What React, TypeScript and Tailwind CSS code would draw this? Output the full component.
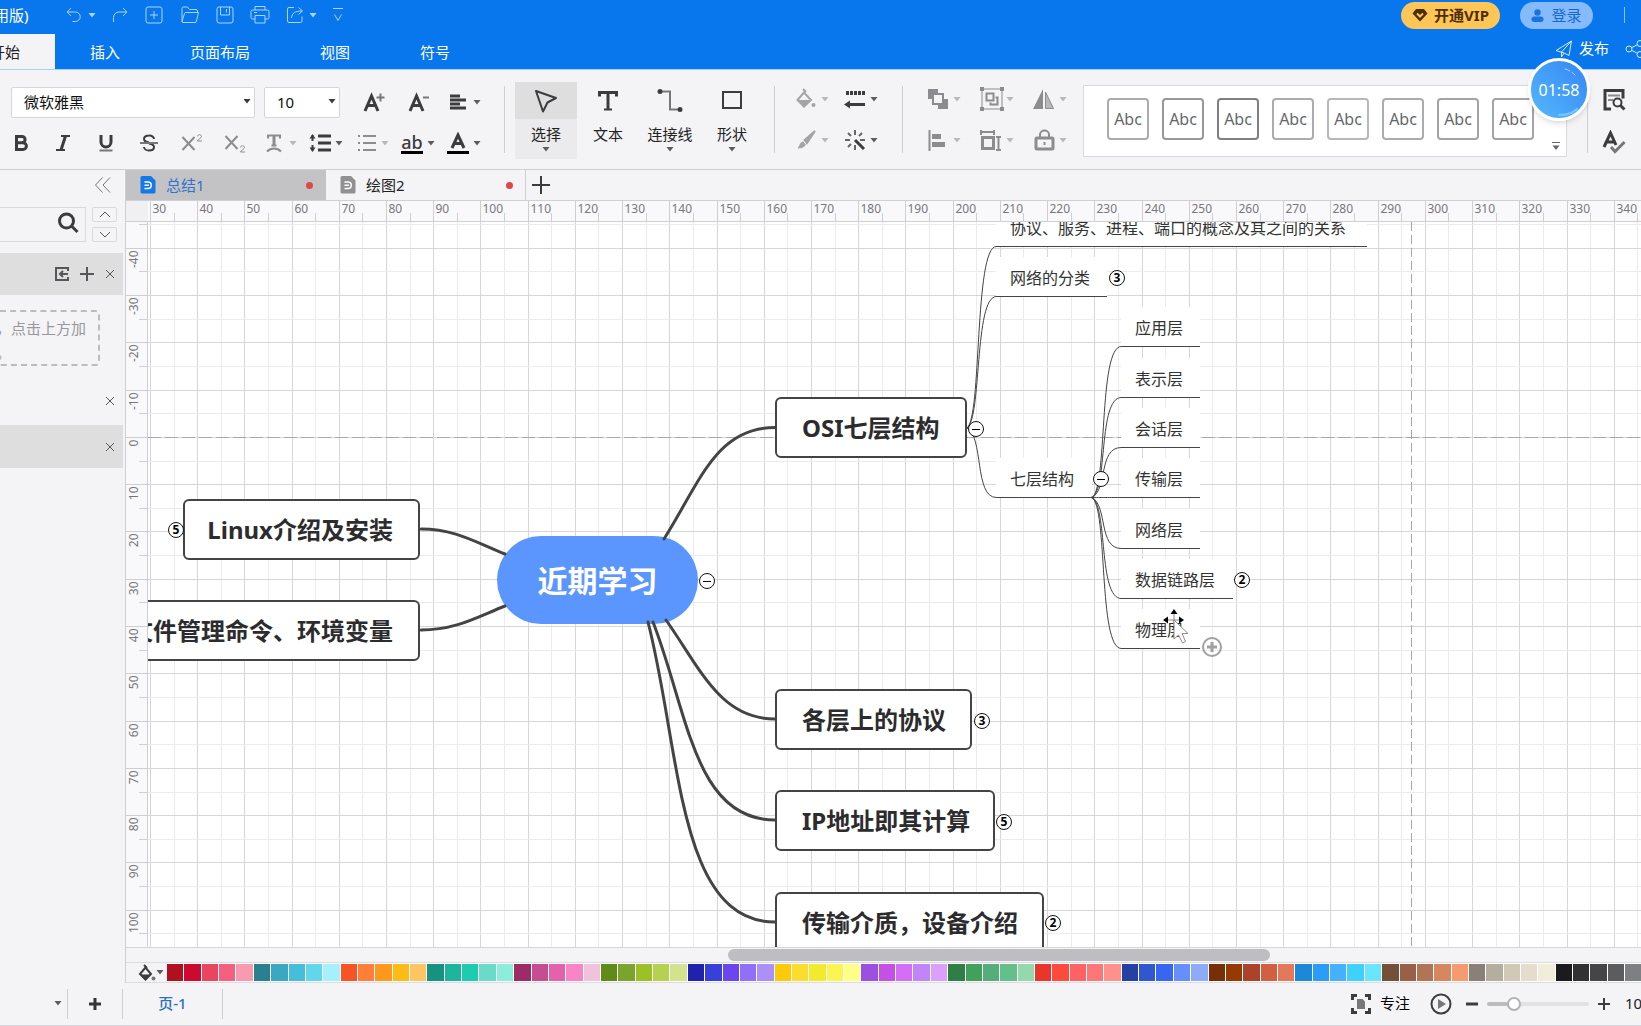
import type { ReactNode } from 'react';
import { clsx } from 'clsx';

const palette = [
    '#b01020', '#cc0a30', '#e84560', '#f5607f', '#f99aae',
    '#2a808f', '#3aa8c0', '#45bedb', '#62d6ea', '#a5f0fc',
    '#f95325', '#ff7f3a', '#ff981c', '#fdbb18', '#fec562',
    '#169380', '#1db59b', '#1ecab0', '#6adaca', '#8aeedb',
    '#9c2c66', '#c44e90', '#e362ab', '#f985c5', '#f1c2de',
    '#5f8c16', '#7aa42b', '#9dbf28', '#b5d14f', '#d2e28e',
    '#1e22ad', '#3940d8', '#6b45ee', '#9170f8', '#aa90f8',
    '#fec80b', '#fcdc2e', '#f2ea2c', '#fbf452', '#feff88',
    '#9b50e0', '#c450e6', '#d66df6', '#c185fa', '#dba0fb',
    '#2d7f46', '#40a05c', '#54ae7a', '#64c08a', '#94d8ac',
    '#e9352b', '#ff4a3e', '#ff6265', '#ff7678', '#ff908a',
    '#2440a5', '#2f58d0', '#3866f2', '#668ffa', '#8cacf8',
    '#782f05', '#963a04', '#ab422b', '#d26040', '#e3785a',
    '#1b88da', '#2b9df8', '#46b2ff', '#40d0fc', '#68e6ff',
    '#755039', '#986046', '#b37455', '#d7875e', '#f69a70',
    '#8b8078', '#b5ad9e', '#d1c8b6', '#e4dccd', '#f2ecdb',
    '#1a1a1f', '#303035', '#454548', '#5c5c60', '#7e7f82',
];

const styleBorders = [
    'border-[#acacb0]', 'border-[#98989c]', 'border-[#808084]', 'border-[#acacb0]',
    'border-[#b8b8bc]', 'border-[#acacb0]', 'border-[#a4a4a8]', 'border-[#a4a4a8]',
];

// grid geometry of the drawing area
const GRID_X = 47.22;
const GRID_Y = 47.28;
const gridX = (n: number) => Math.floor(2.4 + ((n - 30) / 10) * GRID_X) + 0.5;
const gridY = (n: number) => Math.floor(215.4 + (n / 10) * GRID_Y) + 0.5;
const columns = Array.from({ length: 60 }, (_, i) => 30 + i * 10);
const rows = Array.from({ length: 40 }, (_, i) => -50 + i * 10);
const columnMarks = columns.filter((n) => n <= 340);
const rowMarks = rows.filter((n) => n <= 100);

const topics = [
    { text: 'OSI七层结构', left: 627, top: 175, width: 192 },
    { text: '各层上的协议', left: 627, top: 467, width: 197 },
    { text: 'IP地址即其计算', left: 627, top: 568, width: 220 },
    { text: '传输介质，设备介绍', left: 627, top: 670, width: 269 },
    { text: 'Linux介绍及安装', left: 35, top: 277, width: 237 },
    { text: '文件管理命令、环境变量', left: -48, top: 378, width: 320 },
];

const subtopics = [
    { text: '协议、服务、进程、端口的概念及其之间的关系', line: 24, width: 371 },
    { text: '网络的分类', line: 74, width: 111 },
    { text: '七层结构', line: 275, width: 96 },
];

const layers = [
    { text: '应用层', line: 124, width: 79 },
    { text: '表示层', line: 175, width: 79 },
    { text: '会话层', line: 225, width: 79 },
    { text: '传输层', line: 275, width: 79 },
    { text: '网络层', line: 326, width: 79 },
    { text: '数据链路层', line: 376, width: 112 },
    { text: '物理层', line: 426, width: 79 },
];

const counters = [
    { x: 828, y: 207, n: 0 },
    { x: 559, y: 359, n: 0 },
    { x: 953, y: 257, n: 0 },
    { x: 834, y: 499, n: 3 },
    { x: 856, y: 600, n: 5 },
    { x: 905, y: 701, n: 2 },
    { x: 28, y: 308, n: 5 },
    { x: 969, y: 56, n: 3 },
    { x: 1094, y: 358, n: 2 },
];

function Icon({ size = 22, sw = 2, className, children }: { size?: number; sw?: number; className?: string; children: ReactNode }) {
    return (
        <svg width={size} height={size} viewBox={`0 0 ${size} ${size}`} fill="none" stroke="currentColor" strokeWidth={sw} className={clsx('shrink-0', className)} aria-hidden="true">
            {children}
        </svg>
    );
}

function Caret({ className = 'text-[#5c5c60]' }: { className?: string }) {
    return (
        <svg width="8" height="5" viewBox="0 0 8 5" className={clsx('shrink-0', className)} aria-hidden="true">
            <path d="M0.5 0h7L4 4.5z" fill="currentColor" />
        </svg>
    );
}

function IconButton({ label, className, children }: { label: string; className?: string; children: ReactNode }) {
    return (
        <button type="button" aria-label={label} className={clsx('flex shrink-0 items-center justify-center', className)}>
            {children}
        </button>
    );
}

function DropIcon({ label, off, children }: { label: string; off?: boolean; children: ReactNode }) {
    return (
        <button type="button" aria-label={label} className={clsx('flex h-[30px] w-[46px] shrink-0 items-center gap-1', off ? 'text-[#8c8c90]' : 'text-[#3c3c40]')}>
            {children}
            <Caret className={off ? 'text-[#b8b8bc]' : 'text-[#5c5c60]'} />
        </button>
    );
}

function Divider() {
    return <div className="mt-4 h-[67px] w-px shrink-0 bg-[#cfcfd3]" />;
}

function TitleBar() {
    return (
        <div className="flex h-[34px] items-start justify-between text-[#a9d6ff]">
            <div className="flex h-[30px] items-center">
                <span className="-ml-[6px] w-[72px] text-[15px] whitespace-nowrap text-white">用版)</span>
                <IconButton label="撤销" className="w-[15px]">
                    <Icon size={16} sw={1}>
                        <path d="M5 1L1 5L5 9M1 5h8.5a4.500 4.500 0 0 1 0 9.500H6.500" />
                    </Icon>
                </IconButton>
                <IconButton label="撤销列表" className="ml-[7px]"><Caret className="text-[#a9d6ff]" /></IconButton>
                <IconButton label="重做" className="ml-[16px]">
                    <Icon size={16} sw={1}>
                        <path d="M11 1l4 4L11 9M15 5h-8a5.500 5.500 0 0 0-5.500 5.500v4.500" />
                    </Icon>
                </IconButton>
                <IconButton label="新建" className="ml-[17px]">
                    <Icon size={18} sw={1}>
                        <rect x="1" y="1" width="16" height="16" rx="2" />
                        <path d="M9 5v8M5 9h8" />
                    </Icon>
                </IconButton>
                <IconButton label="打开" className="ml-[17px]">
                    <Icon size={20} sw={1}>
                        <path d="M2 17V3.500a1.500 1.500 0 0 1 1.500-1.500h4l2 2.500h6.500a1.500 1.500 0 0 1 1.500 1.500v1.500M2 16.500l2.500-8a1.500 1.500 0 0 1 1.500-1h12.500l-2 8.500a1.500 1.500 0 0 1-1.500 1.500H3a1 1 0 0 1-1-1z" />
                    </Icon>
                </IconButton>
                <IconButton label="保存" className="ml-[16px]">
                    <Icon size={18} sw={1}>
                        <rect x="1" y="1" width="16" height="16" rx="2" />
                        <path d="M4.500 1v8h9V1M10.500 3v3.500" />
                    </Icon>
                </IconButton>
                <IconButton label="打印" className="ml-[16px]">
                    <Icon size={20} sw={1}>
                        <path d="M5 5V1.500h10V5M5 14H2.500A1.500 1.500 0 0 1 1 12.500v-6A1.500 1.500 0 0 1 2.500 5h15A1.500 1.500 0 0 1 19 6.500v6a1.500 1.500 0 0 1-1.500 1.500H15M5 10.500h10v7.500H5zM4 7.500h3" />
                    </Icon>
                </IconButton>
                <IconButton label="导出" className="ml-[16px]">
                    <Icon size={18} sw={1}>
                        <path d="M8 1.500H3A1.500 1.500 0 0 0 1.500 3v12A1.500 1.500 0 0 0 3 16.500h11.500A1.500 1.500 0 0 0 16 15v-4.500M5.500 12c.5-4.500 3-7 10.500-7M12.500 1.500L16.500 5l-4 3.500" />
                    </Icon>
                </IconButton>
                <IconButton label="导出列表" className="ml-[5px]"><Caret className="text-[#a9d6ff]" /></IconButton>
                <IconButton label="自定义" className="ml-[16px]">
                    <svg width="10" height="16" viewBox="0 0 10 16" fill="none" stroke="currentColor" aria-hidden="true">
                        <path d="M0 1.500h10M1.500 7.500L5 13.500l3.500-6" />
                    </svg>
                </IconButton>
            </div>
            <div className="flex h-[30px] items-center">
                <button type="button" className="flex h-[27px] w-[99px] items-center justify-center gap-[6px] rounded-full bg-[#fdc657] text-[15px] font-bold text-[#4e2d05]">
                    <Icon size={16} sw={2}>
                        <path d="M4 2h8l3.500 4.500L8 14.500L0.500 6.500z" fill="#4e2d05" stroke="none" />
                        <path d="M5 6.500l3 3l3-3" stroke="#fdc657" />
                    </Icon>
                    开通VIP
                </button>
                <button type="button" className="ml-5 flex h-[27px] w-[73px] items-center justify-center gap-[7px] rounded-full bg-[#86bbfb] text-[15px] text-[#1668d0]">
                    <Icon size={13} sw={0}>
                        <circle cx="6.500" cy="3.500" r="3.200" fill="#1a72e0" />
                        <rect x="0.500" y="7.500" width="12" height="5.500" rx="2.700" fill="#1a72e0" />
                    </Icon>
                    登录
                </button>
                <div className="mr-4 ml-[31px] h-4 w-px bg-[#8cc4ff]" />
            </div>
        </div>
    );
}

function MenuBar() {
    return (
        <div className="flex h-[35px] justify-between">
            <nav className="-ml-[45px] flex h-full text-[15px] text-white">
                <button type="button" className="bg-[#f4f4f7] px-[35px] pt-0.5 text-[#222]">开始</button>
                <button type="button" className="px-[35px] pt-0.5">插入</button>
                <button type="button" className="px-[35px] pt-0.5">页面布局</button>
                <button type="button" className="px-[35px] pt-0.5">视图</button>
                <button type="button" className="px-[35px] pt-0.5">符号</button>
            </nav>
            <div className="-mr-1 flex items-center pb-1.5 text-[#d5ecff]">
                <button type="button" className="flex items-center gap-[6px] text-[15px] text-white">
                    <Icon size={18} sw={1} className="text-[#d5ecff]">
                        <path d="M1 10.500L16.500 1L14 15.500L9 13zM6.500 12v5l2.500-4M6.500 12L16.500 1" />
                    </Icon>
                    发布
                </button>
                <IconButton label="分享" className="ml-4">
                    <Icon size={20} sw={1}>
                        <circle cx="4" cy="10" r="3" />
                        <circle cx="15" cy="4.500" r="3" />
                        <circle cx="15" cy="15.500" r="3" />
                        <path d="M6.700 8.600l5.600-2.800M6.700 11.400l5.600 2.800" />
                    </Icon>
                </IconButton>
            </div>
        </div>
    );
}

function FontGroup() {
    return (
        <div className="flex w-[504px] shrink-0 flex-col gap-[11px] pt-[17px] text-[#3c3c40]">
            <div className="flex h-[30px] items-center pl-[11px]">
                <div className="relative w-[244px]">
                    <select aria-label="字体" className="h-[31px] w-full appearance-none rounded-xs border border-[#d6d6da] bg-white pl-3 text-[15px] text-[#111]">
                        <option>微软雅黑</option>
                    </select>
                    <Caret className="pointer-events-none absolute top-3 right-1" />
                </div>
                <div className="relative ml-[9px] w-[76px]">
                    <select aria-label="字号" className="h-[31px] w-full appearance-none rounded-xs border border-[#d6d6da] bg-white pl-3 text-[15px] text-[#111]">
                        <option>10</option>
                    </select>
                    <Caret className="pointer-events-none absolute top-3 right-1" />
                </div>
                <IconButton label="增大字号" className="ml-[11px] w-[45px]">
                    <Icon>
                        <path d="M2 20L8.500 5L15 20M4.500 14.500h8" strokeWidth="3" />
                        <path d="M17.500 2.500v8M13.500 6.500h8" stroke="#77777b" />
                    </Icon>
                </IconButton>
                <IconButton label="减小字号" className="w-[45px]">
                    <Icon>
                        <path d="M2 20L8.500 5L15 20M4.500 14.500h8" strokeWidth="3" />
                        <path d="M15 6.500h6" stroke="#77777b" />
                    </Icon>
                </IconButton>
                <div className="ml-[6px]">
                    <DropIcon label="对齐">
                        <Icon>
                            <path d="M3 5h10M3 9h16M3 13h10M3 17h16" strokeWidth="3" />
                        </Icon>
                    </DropIcon>
                </div>
            </div>
            <div className="flex h-[30px] items-center">
                <IconButton label="加粗" className="w-[41px]">
                    <Icon sw={3}>
                        <path d="M6.500 4.500h5.500a3 3 0 0 1 0 6.200H6.500zM6.500 10.700h6.500a3.300 3.300 0 0 1 0 6.800H6.500z" />
                    </Icon>
                </IconButton>
                <IconButton label="倾斜" className="w-[43px]">
                    <Icon>
                        <path d="M9 4h9M4 18h9" />
                        <path d="M13.500 4L9 18" strokeWidth="3" />
                    </Icon>
                </IconButton>
                <IconButton label="下划线" className="w-[43px]">
                    <Icon>
                        <path d="M6 3v7a5 5 0 0 0 10 0V3" strokeWidth="3" />
                        <path d="M4.500 18.500h13" stroke="#77777b" />
                    </Icon>
                </IconButton>
                <IconButton label="删除线" className="w-[43px]">
                    <Icon>
                        <path d="M16 7a4.500 3.800 0 0 0-5-3.500c-3 0-5 1.500-5 3.500s2 3 5 3.500M11 11.500c3 .5 5 1.500 5 3.500s-2 3.500-5 3.500a4.800 3.800 0 0 1-5-3.500" />
                        <path d="M2 11h18" stroke="#77777b" />
                    </Icon>
                </IconButton>
                <IconButton label="上标" className="w-[43px] text-[#8c8c90]">
                    <Icon>
                        <path d="M1.500 5l12 13M13.500 5l-12 13" />
                        <path d="M16.500 4.500c0-2.300 4-2.300 4 0c0 1.500-4 3-4 4.500h4.500" strokeWidth="1" />
                    </Icon>
                </IconButton>
                <IconButton label="下标" className="w-[43px] text-[#8c8c90]">
                    <Icon>
                        <path d="M1.500 4l12 13M13.500 4l-12 13" />
                        <path d="M16.500 15.500c0-2.300 4-2.300 4 0c0 1.500-4 3-4 4.500h4.500" strokeWidth="1" />
                    </Icon>
                </IconButton>
                <div className="ml-[7px] flex">
                    <DropIcon label="文本效果" off>
                        <Icon>
                            <path d="M5 6.500V3.500h12v3M8.500 13.500h5" />
                            <path d="M11 4v9.500" strokeWidth="3" />
                            <path d="M4 19.500c4-4 10-4 14 0" />
                        </Icon>
                    </DropIcon>
                    <DropIcon label="行距">
                        <Icon>
                            <path d="M9 4h13M9 11h13M9 18h13" strokeWidth="3" />
                            <path d="M3.500 3v16" strokeWidth="2" strokeDasharray="6 4" />
                            <path d="M0.500 6.500L3.500 2l3 4.500zM0.500 15.500L3.500 20l3-4.500z" fill="currentColor" stroke="none" />
                        </Icon>
                    </DropIcon>
                    <DropIcon label="项目符号" off>
                        <Icon>
                            <path d="M8 4h13M8 11h13M8 18h13M3 4h2M3 11h2M3 18h2" />
                        </Icon>
                    </DropIcon>
                    <DropIcon label="突出显示">
                        <span className="flex w-[22px] flex-col items-center border-b-3 border-black text-[18px] leading-[18px] font-medium">ab</span>
                    </DropIcon>
                    <DropIcon label="字体颜色">
                        <Icon>
                            <path d="M5 16L11 3L17 16M7 11.500h8" strokeWidth="3" />
                            <path d="M0 20.500h22" stroke="#000" strokeWidth="3" />
                        </Icon>
                    </DropIcon>
                </div>
            </div>
        </div>
    );
}

function ToolButton({ label, active, caret = true, children }: { label: string; active?: boolean; caret?: boolean; children: ReactNode }) {
    return (
        <button type="button" className={clsx('flex h-[77px] w-[62px] flex-col items-center text-[#3c3c40]', active && 'bg-[#ebebed]')}>
            <span className={clsx('flex h-[37px] w-full items-center justify-center', active && 'bg-[#dededf]')}>{children}</span>
            <span className="mt-[3px] mb-px text-[15px] leading-6 text-[#222]">{label}</span>
            {caret && <Caret />}
        </button>
    );
}

function Ribbon() {
    return (
        <div className="flex h-[100px] border-b border-[#d0d0d4] bg-[#f4f4f7]">
            <FontGroup />
            <Divider />
            <div className="mr-[11px] ml-[10px] flex shrink-0 pt-3">
                <ToolButton label="选择" active>
                    <Icon size={24}>
                        <path d="M2 2L22 9L13.500 13.500L9 22.500z" strokeLinejoin="round" />
                    </Icon>
                </ToolButton>
                <ToolButton label="文本" caret={false}>
                    <Icon sw={3}>
                        <path d="M2.500 6.500V2.500h17v4M11 2.500v17" />
                        <path d="M7 19.500h8" strokeWidth="2" />
                    </Icon>
                </ToolButton>
                <ToolButton label="连接线">
                    <Icon size={26}>
                        <path d="M3 3.500h10v18h8" stroke="#77777b" />
                        <circle cx="3" cy="3.500" r="2.500" fill="currentColor" stroke="none" />
                        <circle cx="23" cy="21.500" r="2.500" fill="currentColor" stroke="none" />
                    </Icon>
                </ToolButton>
                <ToolButton label="形状">
                    <Icon>
                        <rect x="2" y="2" width="18" height="16" />
                    </Icon>
                </ToolButton>
            </div>
            <Divider />
            <div className="grid shrink-0 grid-cols-2 content-start gap-x-[3px] gap-y-[11px] pt-[14px] pr-3 pl-5">
                <DropIcon label="填充" off>
                    <Icon className="text-[#a4a4a8]">
                        <path d="M8 1l3 3M9 4.500L2.500 12L9 18.500L16 12z" />
                        <path d="M3 12h13l-7 7.500z" fill="currentColor" stroke="none" />
                        <circle cx="18.500" cy="17" r="2" fill="currentColor" stroke="none" />
                    </Icon>
                </DropIcon>
                <DropIcon label="线条">
                    <Icon>
                        <path d="M2 5h19" strokeWidth="4" strokeDasharray="3 1" />
                        <path d="M4 16.500h17" strokeWidth="3" />
                        <path d="M0 16.500l6-4v8z" fill="currentColor" stroke="none" />
                    </Icon>
                </DropIcon>
                <DropIcon label="格式刷" off>
                    <Icon className="text-[#a4a4a8]">
                        <path d="M20 2L9.500 11l2.500 3z" fill="currentColor" />
                        <path d="M8 12.500l3 3c-2 3.500-5 4-8.500 4c2-2 1.500-6 5.500-7z" fill="currentColor" stroke="none" />
                    </Icon>
                </DropIcon>
                <DropIcon label="美化">
                    <Icon>
                        <path d="M11 1v5M11 16v5M1 11h5M16 11h5M4 4l3 3M18 4l-3 3M4 18l3-3" stroke="#66666a" />
                        <path d="M11 11l9 9" strokeWidth="3" />
                    </Icon>
                </DropIcon>
            </div>
            <Divider />
            <div className="grid shrink-0 grid-cols-3 content-start gap-x-[7px] gap-y-[11px] pt-[14px] pr-1 pl-6">
                <DropIcon label="图层" off>
                    <Icon>
                        <path d="M1 1h10v4H5v6H1zM11 17h6v-6h4v10H11z" fill="currentColor" stroke="none" />
                        <rect x="6" y="6" width="10" height="10" />
                    </Icon>
                </DropIcon>
                <DropIcon label="组合" off>
                    <Icon size={24} className="-mr-0.5">
                        <rect x="2" y="2" width="20" height="20" strokeWidth="1" />
                        <rect x="6.500" y="6.500" width="7" height="7" />
                        <path d="M15.500 10.500h2v7h-7v-2" />
                        <path d="M0 0h4v4H0zM20 0h4v4h-4zM0 20h4v4H0zM20 20h4v4h-4z" fill="currentColor" stroke="none" />
                    </Icon>
                </DropIcon>
                <DropIcon label="翻转" off>
                    <Icon>
                        <path d="M10 1v20H0z" fill="currentColor" stroke="none" />
                        <path d="M12.500 4v16.500h8z" strokeWidth="1" fill="#b8b8bc" />
                    </Icon>
                </DropIcon>
                <DropIcon label="对齐形状" off>
                    <Icon>
                        <path d="M2.500 1v21" />
                        <path d="M5 5h9v5H5zM5 13h13v5H5z" fill="currentColor" stroke="none" />
                    </Icon>
                </DropIcon>
                <DropIcon label="大小" off>
                    <Icon>
                        <rect x="2.500" y="8.500" width="11" height="11" strokeWidth="3" />
                        <path d="M1 3h13M1 1v5M14 1v5M18.500 8v13M16 8h5M16 21h5" />
                    </Icon>
                </DropIcon>
                <DropIcon label="锁定" off>
                    <Icon>
                        <rect x="3" y="9" width="17" height="11" rx="1" strokeWidth="3" />
                        <path d="M7 9V5.500a4.500 4 0 0 1 9 0V9M11.500 13v3" />
                    </Icon>
                </DropIcon>
            </div>
            <div className="mt-[15px] flex h-[72px] min-w-0 flex-1 justify-between overflow-hidden border border-[#dadade] bg-white">
                <div className="flex gap-[13px] pt-3 pl-[23px]">
                    {styleBorders.map((border, i) => (
                        <button key={i} type="button" className={clsx('h-[42px] w-[42px] shrink-0 rounded-sm border-2 text-[16px] text-[#66666a]', border)}>
                            Abc
                        </button>
                    ))}
                </div>
                <IconButton label="更多样式" className="mr-[6px] items-end pb-[6px] text-[#66666a]">
                    <Icon size={8} sw={1}>
                        <path d="M0 0.500h8" />
                        <path d="M0.500 3.500h7L4 8z" fill="currentColor" stroke="none" />
                    </Icon>
                </IconButton>
            </div>
            <div className="flex w-[74px] shrink-0 pl-5 text-[#3c3c40]">
                <Divider />
                <div className="flex flex-col gap-[18px] pt-[18px] pl-[14px]">
                    <IconButton label="查找">
                        <Icon size={24}>
                            <path d="M9 21H3V2.500h18v8" strokeWidth="3" />
                            <path d="M6 7.500h12M6 12h5" stroke="#8c8c90" />
                            <circle cx="15.500" cy="14.500" r="4" />
                            <path d="M18.500 17.500l4 4" strokeWidth="3" />
                        </Icon>
                    </IconButton>
                    <IconButton label="拼写检查">
                        <Icon size={24}>
                            <path d="M2 17L8.500 3L14 15M4 12h9" strokeWidth="3" />
                            <path d="M9 17l4 4.500L22.500 12" stroke="#77777b" strokeWidth="3" />
                        </Icon>
                    </IconButton>
                </div>
            </div>
        </div>
    );
}

function DocIcon({ className }: { className: string }) {
    return (
        <svg width="16" height="18" viewBox="0 0 16 18" className={className} aria-hidden="true">
            <path d="M2 0h9l4.500 4.500V16a1.500 1.500 0 0 1-1.500 1.500H2A1.500 1.500 0 0 1 .5 16V1.500A1.500 1.500 0 0 1 2 0z" fill="currentColor" />
            <path d="M4.500 6H8a3 3 0 0 1 0 6.500H4.500M4.500 9.200H9" stroke="#fff" strokeWidth="1.500" fill="none" />
        </svg>
    );
}

function Close({ label }: { label: string }) {
    return (
        <IconButton label={label}>
            <Icon size={10} sw={1}>
                <path d="M1 1l8 8M9 1L1 9" />
            </Icon>
        </IconButton>
    );
}

function LeftPanel() {
    return (
        <aside className="flex w-[126px] shrink-0 flex-col overflow-hidden border-r border-[#cfcfd3] text-[#55555a]">
            <div className="flex h-[37px] items-center justify-end pr-[13px] pb-2">
                <IconButton label="收起" className="text-[#77777b]">
                    <Icon size={18} sw={1}>
                        <path d="M8.500 1.500L1.500 9l7 7.500M16 1.500L9 9l7 7.500" />
                    </Icon>
                </IconButton>
            </div>
            <div className="flex h-[35px]">
                <label className="flex w-[86px] items-center border border-l-0 border-[#dadade] pr-[6px] pb-[3px]">
                    <input type="text" aria-label="搜索符号" className="min-w-0 flex-1 bg-transparent outline-none" />
                    <Icon className="text-[#3c3c40]">
                        <circle cx="9.500" cy="9" r="7" strokeWidth="3" />
                        <path d="M14.500 14l6 6" strokeWidth="3" />
                    </Icon>
                </label>
                <div className="ml-[6px] flex w-[25px] flex-col justify-between">
                    <IconButton label="上一个" className="h-[15px] rounded-xs border border-[#dadade]">
                        <Icon size={12} sw={1}><path d="M1 8l5-5l5 5" /></Icon>
                    </IconButton>
                    <IconButton label="下一个" className="h-[15px] rounded-xs border border-[#dadade]">
                        <Icon size={12} sw={1}><path d="M1 3l5 5l5-5" /></Icon>
                    </IconButton>
                </div>
            </div>
            <div className="mt-[11px] mr-[2px] flex h-[42px] items-center justify-end gap-[11px] bg-[#dededf] pr-2">
                <IconButton label="导入">
                    <Icon size={14} sw={2}>
                        <path d="M13 4V1H1v12h12v-3" />
                        <path d="M5 7h8M8 4L5 7l3 3" />
                    </Icon>
                </IconButton>
                <IconButton label="添加">
                    <Icon size={14} sw={2}><path d="M7 0v14M0 7h14" /></Icon>
                </IconButton>
                <Close label="关闭我的库" />
            </div>
            <div className="mt-[15px] h-[56px] w-[100px] overflow-hidden rounded-r-sm border-2 border-l-0 border-dashed border-[#bcbcc0] pt-1 text-[15px] leading-6 whitespace-nowrap text-[#98989c]">
                <p className="-ml-1">，点击上方加</p>
                <p className="-ml-1">。</p>
            </div>
            <div className="mt-[13px] mr-[2px] flex h-[43px] items-center justify-end pr-2"><Close label="关闭符号库" /></div>
            <div className="mt-[3px] mr-[2px] flex h-[43px] items-center justify-end bg-[#dededf] pr-2"><Close label="关闭基本符号" /></div>
        </aside>
    );
}

function DocTabs() {
    return (
        <div className="flex h-[31px] shrink-0 border-b border-[#d0d0d4]">
            <button type="button" className="flex w-[200px] items-center bg-[#c3c3c5] pr-[13px] pl-[14px] text-[15px] text-[#2f74cc]">
                <DocIcon className="text-[#1478e6]" />
                <span className="ml-[10px]">总结1</span>
                <span className="ml-auto h-[7px] w-[7px] rounded-full bg-[#e04848]" />
            </button>
            <button type="button" className="flex w-[200px] items-center border-r border-[#cfcfd3] pr-[12px] pl-[14px] text-[15px] text-[#222]">
                <DocIcon className="text-[#909094]" />
                <span className="ml-[10px]">绘图2</span>
                <span className="ml-auto h-[7px] w-[7px] rounded-full bg-[#e04848]" />
            </button>
            <IconButton label="新建绘图" className="w-[30px] text-[#3c3c40]">
                <Icon size={18}><path d="M9 0v18M0 9h18" /></Icon>
            </IconButton>
        </div>
    );
}

function TopRuler() {
    return (
        <svg height="20" className="block min-w-0 flex-1" aria-hidden="true">
            {columnMarks.map((n) => (
                <g key={n}>
                    <path d={`M${gridX(n)} 0v20M${gridX(n + 5)} 12v8`} stroke="#cfcfd3" />
                    <text x={gridX(n) + 2} y="12" fontSize="12" fill="#77777b">{n}</text>
                </g>
            ))}
        </svg>
    );
}

function SideRuler() {
    return (
        <svg width="21" className="block h-full" aria-hidden="true">
            {rowMarks.map((n) => (
                <g key={n}>
                    <path d={`M0 ${gridY(n)}h21M13 ${gridY(n + 5)}h8`} stroke="#cfcfd3" />
                    {n > -50 && (
                        <text transform={`translate(12 ${gridY(n) + 2}) rotate(-90)`} textAnchor="end" fontSize="12" fill="#77777b">{n}</text>
                    )}
                </g>
            ))}
        </svg>
    );
}

function Grid() {
    return (
        <svg className="absolute inset-0 h-full w-full" aria-hidden="true">
            {columns.map((n) => (
                <g key={n}>
                    <line x1={gridX(n + 5)} x2={gridX(n + 5)} y1="0" y2="100%" stroke="#ececee" />
                    <line x1={gridX(n)} x2={gridX(n)} y1="0" y2="100%" stroke="#d6d6d8" />
                </g>
            ))}
            {rows.map((n) => (
                <g key={n}>
                    <line y1={gridY(n + 5)} y2={gridY(n + 5)} x1="0" x2="100%" stroke="#ececee" />
                    <line y1={gridY(n)} y2={gridY(n)} x1="0" x2="100%" stroke="#d6d6d8" />
                </g>
            ))}
            <line x1="0" x2="100%" y1="215.5" y2="215.5" stroke="#a8a8aa" strokeDasharray="13 4" />
            <line x1="1263.5" x2="1263.5" y1="0" y2="100%" stroke="#a8a8aa" strokeDasharray="9 4" />
        </svg>
    );
}

function Leaf({ text, line, width, left }: { text: string; line: number; width: number; left: number }) {
    return (
        <div
            className="absolute flex h-10 items-center border-b border-[#444] bg-white pt-0.5 pl-[14px] text-[16px] whitespace-nowrap text-[#333]"
            style={{ left, top: line - 39, width }}
        >
            {text}
        </div>
    );
}

function Canvas() {
    return (
        <main className="relative min-w-0 flex-1 overflow-hidden bg-white">
            <Grid />
            <div className="absolute top-[314px] left-[349px] flex h-[88px] w-[201px] items-center justify-center rounded-full bg-[#5b96fe] text-[30px] font-bold text-white">
                近期学习
            </div>
            {topics.map((t) => (
                <div
                    key={t.text}
                    className={clsx('absolute flex h-[61px] items-center rounded-md border-2 border-[#444] bg-white text-[24px] font-bold whitespace-nowrap text-[#2c2c2e]', t.left < 600 ? 'justify-end pr-[25px]' : 'pl-[25px]')}
                    style={{ left: t.left, top: t.top, width: t.width }}
                >
                    {t.text}
                </div>
            ))}
            {subtopics.map((s) => <Leaf key={s.text} left={848} {...s} />)}
            {layers.map((s) => <Leaf key={s.text} left={973} {...s} />)}
            <svg className="pointer-events-none absolute inset-0 h-full w-full" fill="none" stroke="#444" strokeLinecap="round" aria-hidden="true">
                <g strokeWidth="3">
                    <path d="M516 317C552 260 568 205.500 627 205.500" />
                    <path d="M518 398C552 446 572 497 627 497" />
                    <path d="M505 400C540 490 546 598 627 598" />
                    <path d="M500 400C533 528 529 700 627 700" />
                    <path d="M273 307C307 307 327 320 357 332" />
                    <path d="M273 408C307 408 327 396 357 384" />
                </g>
                {subtopics.map((s) => (
                    <path key={s.text} d={`M819 206C${s.line > 206 ? '836 214' : '834 198'} 826 ${s.line + 0.5} 848 ${s.line + 0.5}`} />
                ))}
                {layers.map((s) => (
                    <path key={s.text} d={`M944 275.500C960 ${s.line > 275 ? 284 : s.line < 275 ? 268 : 275.5} 950 ${s.line + 0.5} 973 ${s.line + 0.5}`} />
                ))}
            </svg>
            {counters.map((c) => (
                <button
                    key={`${c.x}-${c.y}`}
                    type="button"
                    aria-label={c.n ? `展开 ${c.n}` : '折叠'}
                    className="absolute flex h-4 w-4 -translate-x-1/2 -translate-y-1/2 items-center justify-center rounded-full border border-[#111] bg-white text-[12px] leading-none font-bold text-black"
                    style={{ left: c.x, top: c.y }}
                >
                    {c.n || <span className="h-px w-2 bg-black" />}
                </button>
            ))}
            <button type="button" aria-label="添加主题" className="absolute top-[415px] left-[1054px] text-[#a0a0a2]">
                <Icon size={20}>
                    <circle cx="10" cy="10" r="9" />
                    <path d="M10 5v10M5 10h10" strokeWidth="3" />
                </Icon>
            </button>
            <svg width="28" height="36" viewBox="0 0 28 36" className="absolute top-[387px] left-[1015px]" aria-hidden="true">
                <path d="M11 5v12M2 11h18" stroke="#888" />
                <path d="M11 0l3.500 5h-7zM0 11l5-3.500v7zM21 11l-5-3.500v7zM11 21l-2-4h4z" fill="#000" />
                <path d="M11 11v19l4.500-4l4 8l3-1.500l-3.500-8h6z" fill="#fff" stroke="#8c8c8c" />
            </svg>
        </main>
    );
}

function PaletteBar() {
    return (
        <div className="flex h-[21px] shrink-0 border-y border-[#dcdce0] bg-[#f4f4f7]">
            <div className="flex w-[41px] shrink-0 items-center pl-3 text-[#3c3c40]">
                <Icon size={18}>
                    <path d="M6 1l3 3M7.500 3.500L2 10l5.500 5.500L13 10z" />
                    <path d="M2 10.500h11l-5.500 6z" fill="currentColor" stroke="none" />
                    <circle cx="15.500" cy="14.500" r="2" fill="#77777b" stroke="none" />
                </Icon>
                <Caret />
            </div>
            <div className="flex min-w-0 flex-1 gap-px bg-white py-px">
                {palette.map((color) => (
                    <button key={color} type="button" aria-label={color} className="min-w-0 flex-1" style={{ backgroundColor: color }} />
                ))}
            </div>
        </div>
    );
}

function StatusBar() {
    return (
        <footer className="flex h-[43px] shrink-0 items-center border-b border-[#d6d6da] bg-[#f4f4f7] pb-px text-[15px]">
            <div className="flex h-[30px] w-[68px] shrink-0 items-center justify-end border-r border-[#cfcfd3] pr-[5px]">
                <IconButton label="页面列表"><Caret /></IconButton>
            </div>
            <IconButton label="添加页面" className="h-[30px] w-[55px] border-r border-[#cfcfd3] text-[#333]">
                <Icon size={12} sw={3}><path d="M6 0v12M0 6h12" /></Icon>
            </IconButton>
            <button type="button" className="h-[30px] w-[100px] border-r border-[#cfcfd3] font-medium text-[#2a72bd]">页-1</button>
            <button type="button" className="ml-auto flex items-center gap-[9px] text-black">
                <Icon size={20} sw={3} className="text-[#3c3c40]">
                    <path d="M1.500 6V1.500H6M14 1.500h4.500V6M18.500 14v4.500H14M6 18.500H1.500V14" />
                    <path d="M6 5h5.500L14 7.500V15H6z" fill="#77777b" stroke="none" />
                </Icon>
                专注
            </button>
            <IconButton label="播放" className="ml-5 text-[#3c3c40]">
                <Icon>
                    <circle cx="11" cy="11" r="9.500" />
                    <path d="M8 6l8 5l-8 5z" fill="#77777b" stroke="none" />
                </Icon>
            </IconButton>
            <IconButton label="缩小" className="ml-[14px] text-[#3c3c40]">
                <Icon size={12} sw={3}><path d="M0 6h12" /></Icon>
            </IconButton>
            <input
                type="range"
                aria-label="缩放"
                min="0"
                max="100"
                defaultValue="23"
                className="mx-[9px] h-1 w-[102px] appearance-none rounded-full bg-[linear-gradient(to_right,#bcbcc0_25%,#e2e2e4_25%)] [&::-webkit-slider-thumb]:h-[14px] [&::-webkit-slider-thumb]:w-[14px] [&::-webkit-slider-thumb]:appearance-none [&::-webkit-slider-thumb]:rounded-full [&::-webkit-slider-thumb]:border-2 [&::-webkit-slider-thumb]:border-[#b4b4b8] [&::-webkit-slider-thumb]:bg-white"
            />
            <IconButton label="放大" className="text-[#3c3c40]">
                <Icon size={12} sw={2}><path d="M6 0v12M0 6h12" /></Icon>
            </IconButton>
            <span className="ml-[15px] w-4 overflow-hidden whitespace-nowrap text-[#222]">100%</span>
        </footer>
    );
}

export default function App() {
    return (
        <div className="relative flex h-screen w-full flex-col overflow-hidden bg-[#f4f4f7] font-['Noto_Sans','Noto_Sans_CJK_SC',sans-serif]">
            <header className="shrink-0">
                <div className="border-b border-[#a5d0ff] bg-[#0877ee]">
                    <TitleBar />
                    <MenuBar />
                </div>
                <Ribbon />
            </header>
            <div className="flex min-h-0 flex-1">
                <LeftPanel />
                <div className="flex min-w-0 flex-1 flex-col">
                    <DocTabs />
                    <div className="flex h-[21px] shrink-0 border-b border-[#d0d0d4] bg-[#f9f9fb]">
                        <div className="w-[22px] shrink-0 bg-[#f0f0f2]" />
                        <TopRuler />
                    </div>
                    <div className="flex min-h-0 flex-1">
                        <div className="w-[22px] shrink-0 overflow-hidden border-r border-[#cfcfd3] bg-[#f9f9fb]">
                            <SideRuler />
                        </div>
                        <Canvas />
                    </div>
                    <div className="flex h-[15px] shrink-0 items-center border-t border-[#d6d6da]">
                        <div className="ml-[602px] h-3 w-[542px] rounded-full bg-[#bebdc1]" />
                    </div>
                    <PaletteBar />
                </div>
            </div>
            <StatusBar />
            <div className="absolute top-[58px] right-[51px] flex h-[63px] w-[62px] items-center justify-center rounded-full border-[3px] border-white bg-linear-to-tr from-[#56b8fc] to-[#3585f4] text-[16px] text-white shadow-md">
                <svg viewBox="0 0 56 57" className="absolute inset-0 h-full w-full" fill="none" strokeLinecap="round" aria-hidden="true">
                    <path d="M34 8c4 1 7 3 10 6" stroke="#a8d8ff" strokeDasharray="5 3" />
                    <path d="M28 54c8 0 14-2 18-6" stroke="#7cc6ff" strokeWidth="2" />
                </svg>
                <span className="relative">01:58</span>
            </div>
        </div>
    );
}
